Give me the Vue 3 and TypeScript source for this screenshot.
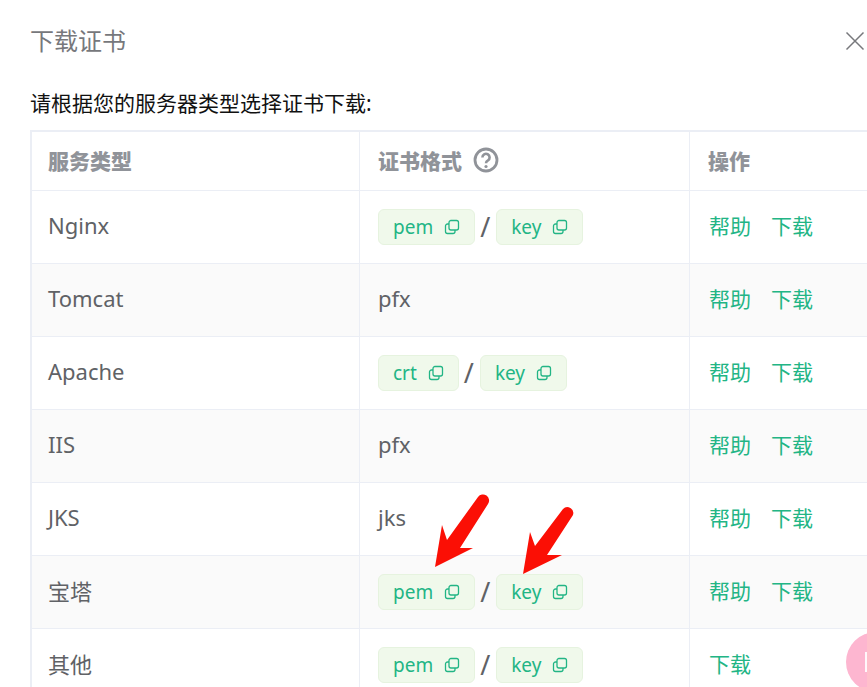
<script setup lang="ts">
interface Row {
  name: string
  formats: string[]
  plain?: string
  help: boolean
}

const rows: Row[] = [
  { name: 'Nginx', formats: ['pem', 'key'], help: true },
  { name: 'Tomcat', formats: [], plain: 'pfx', help: true },
  { name: 'Apache', formats: ['crt', 'key'], help: true },
  { name: 'IIS', formats: [], plain: 'pfx', help: true },
  { name: 'JKS', formats: [], plain: 'jks', help: true },
  { name: '宝塔', formats: ['pem', 'key'], help: true },
  { name: '其他', formats: ['pem', 'key'], help: false }
]
</script>

<template>
  <div class="dialog">
    <header class="dialog-head">
      <h2 class="dialog-title">下载证书</h2>
      <svg class="close" width="20" height="20" viewBox="0 0 20 20" fill="none" stroke="#77787c" stroke-width="1.5">
        <path d="M1.5 1.5 18.500 18.500M18.500 1.500 1.500 18.500" />
      </svg>
    </header>
    <p class="hint">请根据您的服务器类型选择证书下载:</p>
    <div class="table">
      <div class="row row-head">
        <div class="cell">服务类型</div>
        <div class="cell">
          证书格式
          <svg class="question" width="26" height="26" viewBox="0 0 26 26" fill="none">
            <circle cx="13" cy="13" r="11" stroke="#909399" stroke-width="2.800" />
            <path d="M9.400 10.400a3.600 3.600 0 1 1 5.600 3c-1.300.8-2 1.400-2 2.800" stroke="#909399" stroke-width="2.600" />
            <circle cx="13" cy="19.500" r="1.600" fill="#909399" />
          </svg>
        </div>
        <div class="cell">操作</div>
      </div>
      <div v-for="(row, index) in rows" :key="row.name" class="row" :class="{ striped: index % 2 === 1 }">
        <div class="cell"><span class="text">{{ row.name }}</span></div>
        <div class="cell">
          <template v-if="row.formats.length">
            <template v-for="(format, i) in row.formats" :key="format">
              <span v-if="i > 0" class="slash">/</span>
              <span class="tag">
                {{ format }}
                <svg width="16" height="16" viewBox="0 0 16 16" fill="none" stroke="#22b585" stroke-width="1.300">
                  <rect x="5" y="1.500" width="9.500" height="9.500" rx="2" />
                  <path d="M5 5H3.500a2 2 0 0 0-2 2v5.500a2 2 0 0 0 2 2H9a2 2 0 0 0 2-2V11" />
                </svg>
              </span>
            </template>
          </template>
          <span v-else class="text">{{ row.plain }}</span>
        </div>
        <div class="cell actions">
          <a v-if="row.help" class="text">帮助</a>
          <a class="text">下载</a>
        </div>
      </div>
    </div>

    <svg class="arrows" width="867" height="687" viewBox="0 0 867 687">
      <g fill="#fb0f05">
        <path d="M435 567 442 525 447 540 478 497A6 6 0 0 1 488 504L460 548 473 548Z" />
        <path d="M523 574 530 532 535 546 563 509A6 6 0 0 1 573 515L547 555 562 555Z" />
      </g>
    </svg>
    <div class="float-ball"><span></span></div>
  </div>
</template>

<style scoped>
.dialog {
  position: relative;
  width: 867px;
  height: 687px;
  overflow: hidden;
  background: #fff;
  padding: 0 0 0 30px;
  box-sizing: border-box;
  font-family: "Noto Sans", "Noto Sans CJK SC", sans-serif;
  color: #606266;
}

.dialog-head {
  height: 82px;
  display: flex;
  align-items: center;
  justify-content: space-between;
}

.dialog-title {
  margin: 0;
  font-size: 24px;
  font-weight: 400;
  color: #77787c;
  line-height: 1;
}

.close {
  margin-right: 2px;
}

.hint {
  margin: 8px 0 0;
  height: 40px;
  font-size: 21px;
  line-height: 26px;
  color: #111;
}

.table {
  border-top: 2px solid #ebeef5;
  border-left: 2px solid #ebeef5;
  width: 900px;
}

.row {
  display: grid;
  grid-template-columns: 328px 330px 1fr;
  height: 73px;
  border-bottom: 1px solid #ebeef5;
  box-sizing: border-box;
}

.row-head {
  height: 59px;
  color: #909399;
}

.striped {
  background: #fafafa;
}

.cell {
  display: flex;
  align-items: center;
  padding-left: 16px;
  font-size: 22px;
  border-right: 1px solid #ebeef5;
  box-sizing: border-box;
}

.row-head .cell {
  font-size: 21px;
  font-weight: 900;
  padding-bottom: 2px;
}

.row .cell:nth-child(2),
.row-head .cell:nth-child(2),
.row-head .cell:nth-child(3) {
  padding-left: 18px;
}

.text {
  margin-bottom: 4px;
}

.question {
  margin-left: 11px;
}

.tag {
  display: inline-flex;
  align-items: center;
  gap: 11px;
  height: 36px;
  padding: 0 14px 1px;
  box-sizing: border-box;
  background: #f0f9eb;
  border: 1px solid #e6f3df;
  border-radius: 6px;
  font-size: 19px;
  color: #22b585;
}

.tag svg {
  margin-top: 1px;
}

.slash {
  margin: 0 6px 2px 5px;
  font-size: 27px;
  line-height: 1;
}

.actions {
  gap: 20px;
  padding-left: 19px;
  font-size: 21px;
}

.actions a {
  color: #22b585;
}

.arrows {
  position: absolute;
  inset: 0;
  pointer-events: none;
}

.float-ball {
  position: absolute;
  left: 846px;
  top: 632px;
  width: 60px;
  height: 60px;
  border-radius: 50%;
  background: #fdb6d0;
}

.float-ball span {
  position: absolute;
  left: 19px;
  top: 20px;
  width: 6px;
  height: 20px;
  background: #fff;
  opacity: 0.9;
}
</style>

<style>
html, body {
  margin: 0;
  overflow: hidden;
}
</style>
